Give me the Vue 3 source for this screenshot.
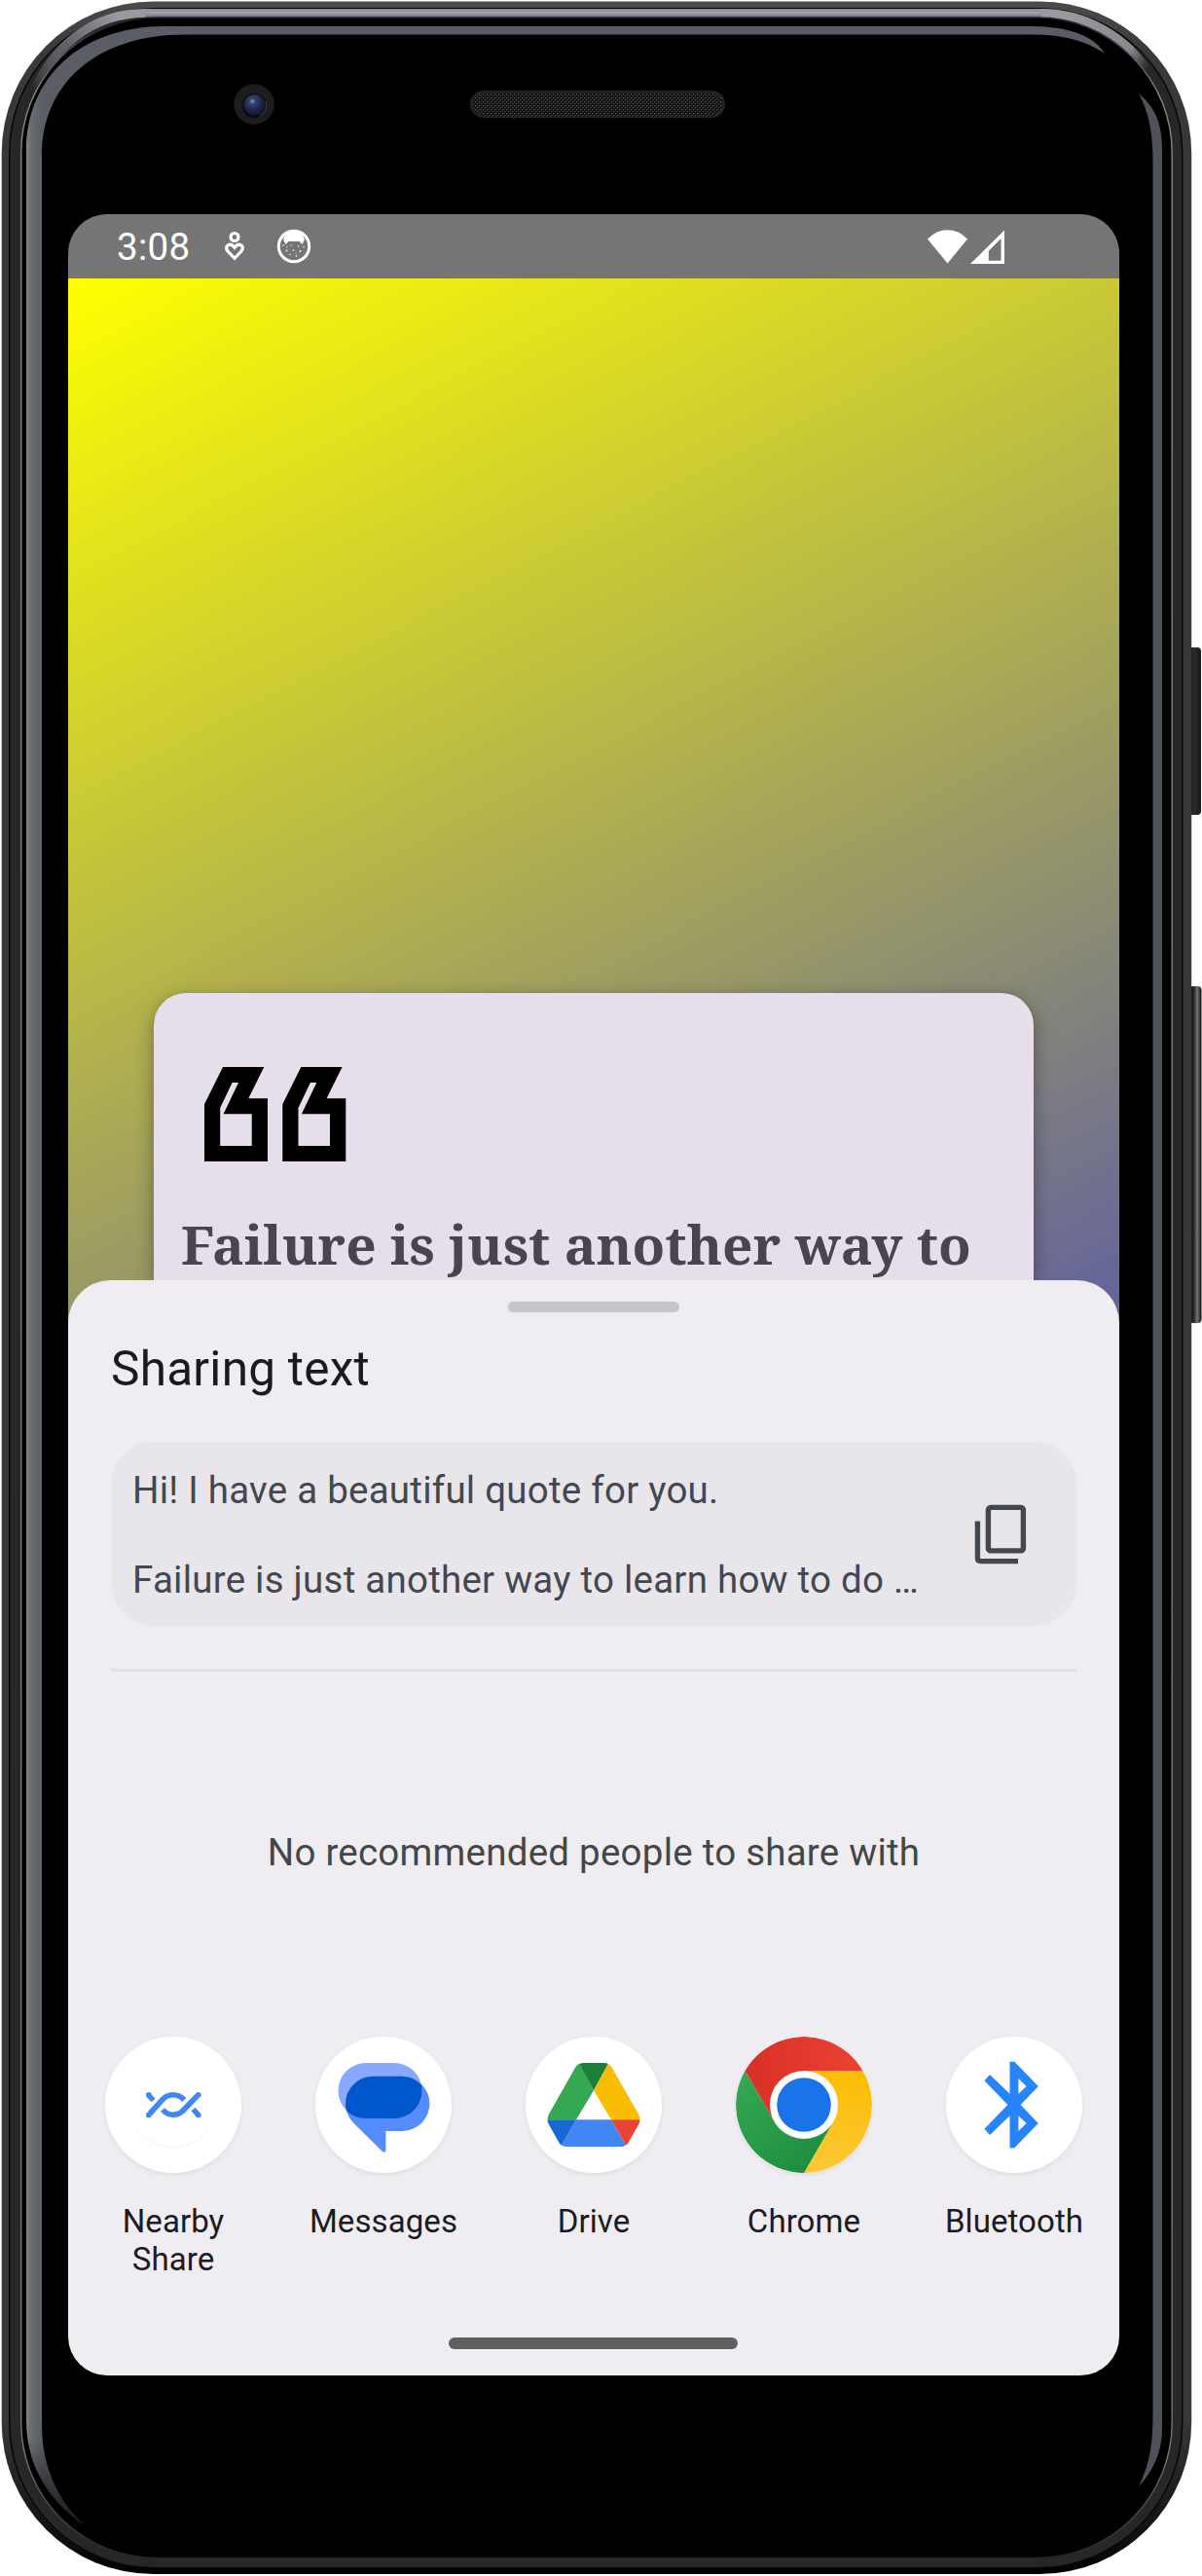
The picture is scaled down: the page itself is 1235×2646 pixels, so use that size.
<script setup>
const apps = [
  { id: 'nearby', label: 'Nearby Share' },
  { id: 'messages', label: 'Messages' },
  { id: 'drive', label: 'Drive' },
  { id: 'chrome', label: 'Chrome' },
  { id: 'bluetooth', label: 'Bluetooth' },
]
const message = 'Hi! I have a beautiful quote for you.\n\nFailure is just another way to learn how to do …'
</script>

<template>
  <div class="device">
    <svg class="frame" viewBox="0 0 1235 2646" aria-hidden="true">
      <defs>
        <linearGradient id="shell" x1="0" y1="0" x2="0" y2="1">
          <stop offset="0" stop-color="#4c4b4b" />
          <stop offset=".02" stop-color="#3a3939" />
          <stop offset=".06" stop-color="#393637" />
          <stop offset=".94" stop-color="#393637" />
          <stop offset=".985" stop-color="#101010" />
          <stop offset="1" stop-color="#000" />
        </linearGradient>
        <linearGradient id="topShine" gradientUnits="userSpaceOnUse" x1="0" y1="9" x2="0" y2="18">
          <stop offset="0" stop-color="#83868a" />
          <stop offset=".45" stop-color="#a3a5aa" />
          <stop offset="1" stop-color="#686b70" />
        </linearGradient>
        <linearGradient id="cornerL" gradientUnits="userSpaceOnUse" x1="36" y1="95" x2="120" y2="16">
          <stop offset="0" stop-color="#909399" stop-opacity="0" />
          <stop offset=".5" stop-color="#606369" />
          <stop offset="1" stop-color="#989a9f" />
        </linearGradient>
        <linearGradient id="cornerR" gradientUnits="userSpaceOnUse" x1="1095" y1="16" x2="1178" y2="72">
          <stop offset="0" stop-color="#989a9f" />
          <stop offset=".75" stop-color="#85888e" />
          <stop offset="1" stop-color="#85888e" stop-opacity="0" />
        </linearGradient>
        <linearGradient id="rim" x1="0" y1="0" x2="0" y2="1">
          <stop offset="0" stop-color="#222" />
          <stop offset=".03" stop-color="#858585" />
          <stop offset=".96" stop-color="#757575" />
          <stop offset="1" stop-color="#242424" />
        </linearGradient>
        <linearGradient id="glass" gradientUnits="userSpaceOnUse" x1="26" y1="0" x2="44" y2="0">
          <stop offset="0" stop-color="#85888c" />
          <stop offset=".3" stop-color="#6a6d72" />
          <stop offset="1" stop-color="#5a5d65" />
        </linearGradient>
        <linearGradient id="glassFade" x1="0" y1="0" x2="0" y2="1">
          <stop offset=".965" stop-color="#000" stop-opacity="0" />
          <stop offset="1" stop-color="#000" stop-opacity=".75" />
        </linearGradient>
        <linearGradient id="button" x1="0" y1="0" x2="1" y2="0">
          <stop offset="0" stop-color="#0b0b0b" />
          <stop offset=".5" stop-color="#2b2b2b" />
          <stop offset="1" stop-color="#171717" />
        </linearGradient>
        <linearGradient id="buttonLit" x1="0" y1="0" x2="1" y2="0">
          <stop offset="0" stop-color="#0b0b0b" />
          <stop offset=".35" stop-color="#242424" />
          <stop offset=".65" stop-color="#747474" />
          <stop offset="1" stop-color="#0d0d0d" />
        </linearGradient>
        <radialGradient id="lens" cx=".4" cy=".32" r=".65">
          <stop offset="0" stop-color="#8995c0" />
          <stop offset=".22" stop-color="#35406f" />
          <stop offset=".65" stop-color="#1d2649" />
          <stop offset="1" stop-color="#10162a" />
        </radialGradient>
        <pattern id="mesh" width="4" height="4" patternUnits="userSpaceOnUse">
          <rect width="4" height="4" fill="#121212" />
          <rect width="1.4" height="1.4" fill="#525452" />
          <rect x="2" y="2" width="1.4" height="1.4" fill="#424442" />
        </pattern>
      </defs>

      <rect x="1220" y="665" width="14" height="172" rx="4" fill="url(#button)" />
      <rect x="1222" y="1013" width="12.5" height="346" rx="4" fill="url(#buttonLit)" />

      <rect x="1.7" y="1.5" width="1222.5" height="2642.5" rx="156" fill="url(#shell)" />
      <rect x="9" y="8" width="1206.5" height="2630" rx="149" fill="#060606" />
      <rect x="10.5" y="9" width="1203.5" height="2628" rx="148" fill="#272727" />
      <path d="M150 9H1070V18H150Z" fill="url(#topShine)" />
      <path d="M30 105C52 48 94 13.500 150 13.500" fill="none" stroke="url(#cornerL)" stroke-width="9" />
      <path d="M1070 13.500C1115 13.500 1158 38 1180 75" fill="none" stroke="url(#cornerR)" stroke-width="9" />
      <rect x="21.700" y="18" width="1182.500" height="2609.500" rx="139" fill="#000" stroke="url(#rim)" stroke-width="1.400" />

      <path d="M87 2594C52 2570 27 2535 27 2485V155C27 80 82 27 170 27H1060C1100 27 1125 38 1135 55C1115 41 1090 35.500 1060 35.500H190C100 35.500 43 85 43 160V2490C43 2535 60 2570 87 2594Z" fill="url(#glass)" />
      <path d="M87 2594C52 2570 27 2535 27 2485V155C27 80 82 27 170 27H1060C1100 27 1125 38 1135 55C1115 41 1090 35.500 1060 35.500H190C100 35.500 43 85 43 160V2490C43 2535 60 2570 87 2594Z" fill="url(#glassFade)" />
      <path d="M1170 96C1186 110 1194 125 1194 155V2495C1194 2522 1182 2541 1170 2554C1180 2533 1184.500 2515 1184.500 2480V165C1184.500 135 1180 115 1170 96Z" fill="#505259" />

      <circle cx="261" cy="107" r="20.700" fill="#1d1d1d" />
      <circle cx="261.500" cy="108.500" r="12.500" fill="#0a0a0c" />
      <circle cx="261.500" cy="108" r="11" fill="url(#lens)" />
      <path d="M267 119A12 12 0 0 0 273 104" fill="none" stroke="#484848" />
      <rect x="484" y="94" width="260" height="26" rx="13" fill="url(#mesh)" stroke="#232326" stroke-width="2" />
    </svg>

    <main class="screen">
      <header class="status">
        <time class="clock">3:08</time>
        <svg class="ico-heart" width="22" height="32" viewBox="0 0 22 32">
          <g fill="none" stroke="#fff" stroke-width="3.200">
            <circle cx="11" cy="6.500" r="4" />
            <path d="M11 28.300L4.200 21.300Q1.300 17.500 4 15Q7.600 12.700 11 17.300Q14.400 12.700 18 15Q20.700 17.500 17.800 21.300Z" />
          </g>
        </svg>
        <svg class="ico-cat" width="36" height="36" viewBox="0 0 36 36">
          <circle cx="18" cy="18" r="15.700" fill="none" stroke="#fff" stroke-width="3" />
          <path d="M7 11Q10 2 18 2T29 11L26.500 16L23.500 13H12.500L9.500 16Z" fill="#fff" />
          <g fill="#fff">
            <circle cx="7" cy="17" r=".8" /><circle cx="10.500" cy="22.500" r=".9" /><circle cx="15" cy="17" r=".7" />
            <circle cx="17.500" cy="22" r=".8" /><circle cx="22.500" cy="18" r=".8" /><circle cx="24.500" cy="23" r=".9" />
            <circle cx="28" cy="18.500" r=".7" /><circle cx="14" cy="26.500" r=".7" /><circle cx="20.500" cy="28" r=".8" />
            <circle cx="11" cy="18.500" r=".6" /><circle cx="20" cy="25" r=".6" />
          </g>
        </svg>
        <svg class="ico-wifi" width="41" height="35" viewBox="0 0 41 35">
          <path d="M0 9.500Q9 .3 20.500 .3T41 9.500L20.500 34.500Z" fill="#fff" />
        </svg>
        <svg class="ico-signal" width="35" height="35" viewBox="0 0 35 35">
          <path d="M0 35L35 .5V35ZM18.800 31.700H31.500V9L18.800 21.700Z" fill="#fff" fill-rule="evenodd" />
        </svg>
      </header>

      <section class="stage">
        <article class="card">
          <svg class="quote-mark" width="146" height="98" viewBox="0 0 146 98">
            <path fill-rule="evenodd" d="M19 0H61.300L45.300 32.300H65V97H0V38.300ZM28.600 16L16.200 42V81H48.700V48.300H19.600L35 16ZM99.300 0H141.600L125.600 32.300H145.300V97H80.300V38.300ZM108.900 16L96.500 42V81H129V48.300H99.900L115.300 16Z" />
          </svg>
          <p class="quote">Failure is just another way to</p>
        </article>
      </section>

      <section class="sheet">
        <div class="handle"></div>
        <h1 class="title">Sharing text</h1>
        <div class="preview">
          <p class="message">{{ message }}</p>
          <svg width="54" height="62" viewBox="0 0 54 62" fill="none" stroke="#444750" stroke-width="5.400">
            <rect x="14.400" y="3.400" width="36" height="44.500" rx="2.500" />
            <path d="M3.400 17.500V55.600Q3.400 58.600 6.400 58.600H45" />
          </svg>
        </div>
        <hr class="divider">
        <p class="empty">No recommended people to share with</p>

        <ul class="apps">
          <li v-for="app in apps" :key="app.id" class="app">
            <svg class="app-icon" viewBox="0 0 140 140">
              <template v-if="app.id === 'nearby'">
                <path d="M33 94A44.700 44.700 0 0 0 107 94" fill="none" stroke="#efefef" stroke-width=".8" />
                <g fill="none" stroke="#4285f4" stroke-width="5.600">
                  <path d="M46 79L60 63.500Q64 59.700 70 59.700Q76.500 59.700 81.300 65" />
                  <path d="M59 75Q63.500 80.200 70 80.200Q76 80.200 80 76L94.500 61" />
                  <path d="M45 60.500L49.500 65.500M90.500 74.500L95 79.500" />
                </g>
                <g fill="#4285f4">
                  <circle cx="44.800" cy="59.800" r="2.900" /><circle cx="44.800" cy="80.300" r="2.900" />
                  <circle cx="95.700" cy="59.800" r="2.900" /><circle cx="95.700" cy="80.300" r="2.900" />
                </g>
              </template>
              <template v-else-if="app.id === 'messages'">
                <path d="M52 27H81A28.500 28.500 0 0 1 81 84H52A28.500 28.500 0 0 1 52 27Z" fill="#87a9ff" />
                <path d="M59.500 40.700H89.300A28.150 28.150 0 0 1 89.300 97H72.400V116.500Q72.400 120 69 118L39 88.500Q31 80 31 69A28.300 28.300 0 0 1 59.500 40.700Z" fill="#578cff" />
                <path d="M59.500 40.700H89.300Q100.500 41 108.800 49.500Q109.500 52.500 109.500 55.500A28.500 28.500 0 0 1 81 84H52Q40 84 32 76Q31 72 31 69A28.300 28.300 0 0 1 59.500 40.700Z" fill="#0057cc" />
              </template>
              <template v-else-if="app.id === 'drive'">
                <path d="M22.500 85.300Q22.500 82 24 79.500L51.500 31Q53 28.500 55.500 27.800L70 55.300L52 85.300Z" fill="#34a853" />
                <path d="M55.200 28Q57 27 59.500 27H80.500Q83 27 84.800 28L70 55.300Z" fill="#188038" />
                <path d="M84.800 28Q87 29 88.500 31.500L116 79.500Q117.500 82 117.500 85.300H88L70 55.300Z" fill="#fbbc04" />
                <path d="M52 85.300H88L103 111.500Q100.500 113 98 113H42Q39.500 113 37 111.500Z" fill="#4285f4" />
                <path d="M22.500 85.300H52L37 111.500Q35.500 110.500 34.500 109L24 90.500Q22.500 88 22.500 85.300Z" fill="#1967d2" />
                <path d="M117.500 85.300H88L103 111.500Q104.500 110.500 105.500 109L116 90.500Q117.500 88 117.500 85.300Z" fill="#ea4335" />
              </template>
              <template v-else-if="app.id === 'chrome'">
                <defs>
                  <linearGradient id="cRed" x1="0" y1="0" x2="1" y2="0">
                    <stop offset="0" stop-color="#d93025" /><stop offset="1" stop-color="#ea4335" />
                  </linearGradient>
                  <linearGradient id="cYellow" x1=".5" y1="1" x2=".6" y2="0">
                    <stop offset="0" stop-color="#fcc934" /><stop offset="1" stop-color="#fbbc04" />
                  </linearGradient>
                  <linearGradient id="cGreen" x1=".7" y1="1" x2="0" y2=".1">
                    <stop offset="0" stop-color="#1e8e3e" /><stop offset="1" stop-color="#34a853" />
                  </linearGradient>
                </defs>
                <path d="M9.400 35A70 70 0 0 1 130.600 35H70V70L39.700 87.500Z" fill="url(#cRed)" />
                <path d="M130.600 35A70 70 0 0 1 70 140L100.300 87.500L70 70V35Z" fill="url(#cYellow)" />
                <path d="M9.400 35A70 70 0 0 0 70 140L100.300 87.500L70 70L39.700 87.500Z" fill="url(#cGreen)" />
                <circle cx="70" cy="70" r="35" fill="#fff" />
                <circle cx="70" cy="70" r="27.800" fill="#1a73e8" />
              </template>
              <path
                v-else
                fill="#2684fc"
                fill-rule="evenodd"
                d="M65.500 25.700H70.300L94.800 51L76.600 70L94.800 89L70.300 114.300H65.500V81.300L45 101L39.400 94.700L63.400 70L39.400 45.300L45 39L65.500 58.700ZM74.400 43V58.700L82.600 51ZM74.400 81.300V97L82.600 89Z"
              />
            </svg>
            <span class="app-label">{{ app.label }}</span>
          </li>
        </ul>
        <div class="nav-pill"></div>
      </section>
    </main>
  </div>
</template>

<style>
body {
  margin: 0;
  background: #fff;
}
</style>

<style scoped>
.device {
  position: relative;
  box-sizing: border-box;
  width: 1235px;
  height: 2646px;
  padding: 220px 85px 206px 70px;
  overflow: hidden;
  font-family: Roboto, sans-serif;
}

.frame {
  position: absolute;
  inset: 0;
  width: 1235px;
  height: 2646px;
}

.screen {
  position: relative;
  display: flex;
  flex-direction: column;
  width: 1080px;
  height: 2220px;
  overflow: hidden;
  border-radius: 40px;
  background: linear-gradient(152.65deg, #ff0, #00f) 0 66px / 1080px 2088px no-repeat;
}

.status {
  box-sizing: border-box;
  display: flex;
  align-items: center;
  height: 66px;
  padding: 0 118px 0 50px;
  background: #757575;
  color: #fff;
}

.clock {
  width: 110px;
  padding-top: 2px;
  font-size: 38.5px;
  letter-spacing: .3px;
  line-height: 64px;
}

.ico-cat {
  margin-left: 32px;
}

.ico-wifi {
  margin: 0 3px 0 auto;
}

.stage {
  box-sizing: border-box;
  height: 1029px;
  padding: 734px 88px 0;
  overflow: hidden;
}

.card {
  box-sizing: border-box;
  height: 295px;
  padding: 76px 0 0 28px;
  border-radius: 33px 33px 0 0;
  background: #e6deeb;
  box-shadow: 0 5px 18px rgba(0, 0, 0, .36);
}

.quote-mark {
  display: block;
  margin-left: 24px;
}

.quote {
  margin: 58px 0 0;
  color: #49454f;
  font: 700 55px/52px "Noto Serif", "DejaVu Serif Condensed", "DejaVu Serif", serif;
  white-space: nowrap;
}

.sheet {
  box-sizing: border-box;
  height: 1125px;
  padding: 22px 44px 0;
  border-radius: 44px 44px 0 0;
  background: #efedf2;
}

.handle {
  width: 176px;
  height: 11px;
  margin: 0 auto;
  border-radius: 5.5px;
  background: #c4c7c5;
}

.title {
  margin: 28px 0 0;
  color: #191c1e;
  font-size: 49.5px;
  font-weight: 400;
  letter-spacing: .25px;
  line-height: 60px;
}

.preview {
  box-sizing: border-box;
  display: flex;
  align-items: center;
  justify-content: space-between;
  height: 189px;
  margin-top: 45px;
  padding: 0 51px 0 22px;
  border-radius: 44px;
  background: #e8e6eb;
}

.message {
  margin: 0;
  padding-top: 3px;
  color: #444750;
  font-size: 38.5px;
  letter-spacing: .24px;
  line-height: 46px;
  white-space: pre-line;
}

.divider {
  height: 3px;
  margin: 44px 0 0;
  border: 0;
  background: #e1e1e6;
}

.empty {
  margin: 163px 0 0;
  color: #444746;
  font-size: 38.5px;
  letter-spacing: .24px;
  line-height: 46px;
  text-align: center;
}

.apps {
  display: grid;
  grid-template-columns: repeat(5, 216px);
  height: 309px;
  margin: 166px -44px 0;
  padding: 0;
  list-style: none;
}

.app {
  display: flex;
  flex-direction: column;
  align-items: center;
  gap: 30px;
}

.app-icon {
  flex: none;
  width: 140px;
  height: 140px;
  border-radius: 50%;
  background: #fff;
  box-shadow: 0 2px 5px rgba(0, 0, 0, .07);
}

.app-label {
  max-width: 160px;
  color: #1c1b1f;
  font-size: 33px;
  letter-spacing: .08px;
  line-height: 39px;
  text-align: center;
}

.nav-pill {
  width: 297px;
  height: 11.5px;
  margin: 0 0 0 347px;
  border-radius: 6px;
  background: #5f5f5f;
}
</style>
